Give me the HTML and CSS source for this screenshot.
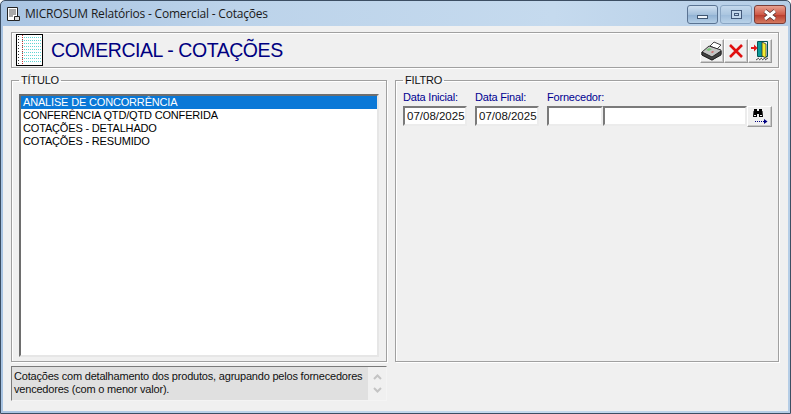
FILE: index.html
```html
<!DOCTYPE html>
<html lang="pt-BR">
<head>
<meta charset="utf-8">
<title>MICROSUM Relatórios - Comercial - Cotações</title>
<link rel="stylesheet" href="styles.css">
</head>
<body>
<div class="window">
  <div class="titlebar">
    <svg class="app-icon" width="14" height="16" viewBox="0 0 14 16"><path d="M1.5 1.5h10v13h-10z" fill="#fff" stroke="#222"/><path d="M3 4h7M3 6h7M3 8h7M3 10h4" stroke="#555"/><path d="M8.5 10.5h5v4h-5z" fill="#ddd" stroke="#222"/></svg>
    <span class="title-text">MICROSUM Relatórios - Comercial - Cotações</span>
    <div class="caption-buttons">
      <div class="cap cap-min"><span class="min-glyph"></span></div>
      <div class="cap cap-max"><span class="max-glyph"></span></div>
      <div class="cap cap-close">
        <svg width="16" height="12" viewBox="0 0 16 12"><path d="M3 2l10 8M13 2L3 10" stroke="#4a2a28" stroke-width="4.4"/><path d="M3 2l10 8M13 2L3 10" stroke="#fff" stroke-width="3"/></svg>
      </div>
    </div>
  </div>
  <div class="client">
    <div class="header">
      <svg class="note-icon" width="27" height="32" viewBox="0 0 27 32">
        <rect x="0.5" y="0.5" width="26" height="31" fill="#fff" stroke="#000"/>
        <path d="M6 3.500H25M6 6.500H25M6 9.500H25M6 12.500H25M6 15.500H25M6 18.500H25M6 21.500H25M6 24.500H25M6 27.500H25" stroke="#5fd4d4" stroke-dasharray="1 1"/>
        <path d="M6.500 1v30" stroke="#c03030" stroke-dasharray="1 1"/>
        <path d="M2.500 2v28" stroke="#333" stroke-dasharray="1 2"/>
      </svg>
      <h1 class="heading">COMERCIAL - COTAÇÕES</h1>
      <div class="tools">
        <button class="tool" aria-label="Imprimir">
          <svg width="22" height="20" viewBox="0 0 22 20">
            <path d="M9 5l4-4 7 3-4 4z" fill="#fff" stroke="#444"/>
            <path d="M1 11l7-6 12 4v4l-9 6-10-5z" fill="#c4c4c4" stroke="#333"/>
            <path d="M1 11l10 5 9-6v4l-9 5-10-5z" fill="#444" stroke="#222"/>
            <path d="M5 9l3-2 3 1-3 2z" fill="#7cc47c"/>
            <path d="M10 11l2-1 1 1-2 1z" fill="#d06060"/>
          </svg>
        </button>
        <button class="tool" aria-label="Cancelar">
          <svg width="16" height="16" viewBox="0 0 16 16"><path d="M2 2l12 12M14 2L2 14" stroke="#e01010" stroke-width="2.6"/></svg>
        </button>
        <button class="tool" aria-label="Sair">
          <svg width="20" height="20" viewBox="0 0 20 20">
            <path d="M7.500 0.500h10v15h-10z" fill="#e8f4f4" stroke="#055"/>
            <path d="M8 1h4l0 14H8z" fill="#0a9a9a"/>
            <path d="M12 1l4 2v14l-4-2z" fill="#f4ee30" stroke="#333" stroke-width="0.8"/>
            <path d="M1 6h3V3.500L7.500 7 4 10.500V8H1z" fill="#e01818"/>
            <path d="M6 19l3-2M9 19l3-2M12 19l3-2M15 19l3-2" stroke="#444"/>
          </svg>
        </button>
      </div>
    </div>
    <div class="columns">
      <div class="left">
        <fieldset class="group group-title">
          <legend>TÍTULO</legend>
          <ul class="list">
            <li class="row selected">ANALISE DE CONCORRÊNCIA</li>
            <li class="row">CONFERÊNCIA QTD/QTD CONFERIDA</li>
            <li class="row">COTAÇÕES - DETALHADO</li>
            <li class="row">COTAÇÕES - RESUMIDO</li>
          </ul>
        </fieldset>
        <div class="description">
          <p class="desc-text">Cotações com detalhamento dos produtos, agrupando pelos fornecedores vencedores (com o menor valor).</p>
          <div class="desc-scroll">
            <svg width="9" height="6" viewBox="0 0 9 6"><path d="M1 5l3.500-3.500L8 5" fill="none" stroke="#c4c4c4" stroke-width="2"/></svg>
            <svg width="9" height="6" viewBox="0 0 9 6"><path d="M1 1l3.500 3.500L8 1" fill="none" stroke="#c4c4c4" stroke-width="2"/></svg>
          </div>
        </div>
      </div>
      <fieldset class="group group-filter">
        <legend>FILTRO</legend>
        <div class="filters">
          <div class="field">
            <label class="lbl">Data Inicial:</label>
            <input class="input date" value="07/08/2025">
          </div>
          <div class="field">
            <label class="lbl">Data Final:</label>
            <input class="input date" value="07/08/2025">
          </div>
          <div class="field field-grow">
            <label class="lbl">Fornecedor:</label>
            <div class="supplier">
              <input class="input code" value="">
              <input class="input name" value="">
              <button class="tool search" aria-label="Pesquisar">
                <svg width="18" height="16" viewBox="0 0 18 16">
                  <path d="M3 0h3v2h2V0h3v2h.5L12 8H8V5H6v3H2l.5-6H3z" fill="#000"/>
                  <path d="M3 6h2v1H3zM9 6h2v1H9z" fill="#f0f0f0"/>
                  <path d="M4 12.500h9" stroke="#000080" stroke-dasharray="1 1"/>
                  <path d="M13 10l3.500 2.500L13 15z" fill="#000080"/>
                </svg>
              </button>
            </div>
          </div>
        </div>
      </fieldset>
    </div>
  </div>
</div>
</body>
</html>
```
FILE: styles.css
```css
* { box-sizing: border-box; }
html, body { margin: 0; padding: 0; }
body { width: 791px; height: 414px; overflow: hidden; font-family: "Liberation Sans", Arial, sans-serif; }
.window {
  width: 791px; height: 414px; display: flex; flex-direction: column;
  border: 1px solid #3c4e63; border-radius: 5px 5px 0 0; padding: 0 2px 2px; overflow: hidden;
  background: linear-gradient(90deg, #a9c4e2 0, #bcd3ea 30%, #c5daee 70%, #b5cde6 100%);
}
.titlebar { height: 25px; display: flex; align-items: center; flex: none; }
.app-icon { margin-left: 3px; margin-right: 5px; }
.title-text { font-family: "Open Sans", sans-serif; font-size: 12px; color: #1a1a1a; letter-spacing: -0.2px; }
.caption-buttons { margin-left: auto; display: flex; gap: 2px; align-self: flex-start; margin-top: 4px; margin-right: 2px; }
.cap { height: 19px; display: flex; align-items: center; justify-content: center; border: 1px solid #5a7392; border-radius: 3px; }
.cap-min { width: 31px; background: linear-gradient(#d0e0f0, #a4c0dc 50%, #8fb0d2 52%, #b4cee6); }
.cap-max { width: 32px; background: linear-gradient(#c4d8ec, #abc6e0 50%, #9ebcdb 52%, #b9d2e8); border-color: #8aa6c4; }
.cap-close { width: 32px; background: linear-gradient(#e8a090, #cf5a48 50%, #b93a2c 52%, #d47a60); border-color: #7a3d38; }
.min-glyph { width: 11px; height: 4px; margin-top: 5px; background: #eef4fa; border: 1px solid #3f5570; }
.max-glyph { width: 11px; height: 9px; background: #c4d8ec; border: 1px solid #43597a; box-shadow: inset 0 0 0 2px #c4d8ec, inset 0 0 0 3px #43597a; }
.client { flex: 1; background: #f0f0f0; padding: 6px 9px 0 8px; display: flex; flex-direction: column; min-height: 0; }
.header {
  height: 36px; display: flex; align-items: center; padding: 0 6px 0 4px; border: 1px solid #a0a0a0; box-shadow: inset 1px 1px 0 #fff, 1px 1px 0 #fff; flex: none;
}
.note-icon { flex: none; }
.heading { margin: 0 0 0 8px; font-size: 19.5px; font-weight: 400; color: #000080; letter-spacing: -0.44px; line-height: 1; padding-top: 1px; }
.tools { margin-left: auto; display: flex; gap: 0; padding-top: 1px; }
.tool {
  width: 24px; height: 24px; padding: 0; background: #f0f0f0; display: flex; align-items: center; justify-content: center;
  border: 1px solid; border-color: #fff #9a9a9a #9a9a9a #fff; outline: none; box-shadow: inset -1px -1px 0 #c8c8c8;
}
.columns { flex: 1; display: flex; gap: 8px; margin-top: 6px; min-height: 0; }
.left { width: 376px; flex: none; display: flex; flex-direction: column; }
.group {
  margin: 0; min-width: 0; border: 1px solid #a0a0a0; box-shadow: inset 1px 1px 0 #fff, 1px 1px 0 #fff; font-size: 11px;
}
.group legend { padding: 0 2px; margin-left: 0; font-size: 11px; letter-spacing: -0.2px; color: #111; line-height: 13px; }
.group-title { height: 288px; padding: 7px 7px 4px 7px; }
.list {
  margin: 0; padding: 0; list-style: none; height: 263px; background: #fff; border: 2px solid; border-color: #6e6e6e #e6e6e6 #e6e6e6 #6e6e6e;
  font-size: 11px; letter-spacing: -0.17px;
}
.row { height: 13px; line-height: 13px; padding-left: 2px; color: #000; white-space: nowrap; }
.selected { background: #0a78d7; color: #fff; }
.description {
  margin-top: 4px; height: 35px; display: flex; background: #e0e0e0; border: 1px solid; border-color: #7a7a7a #f4f4f4 #f4f4f4 #7a7a7a;
}
.desc-text { margin: 0; flex: 1; padding: 3px 2px 0 2px; font-size: 11px; letter-spacing: -0.2px; line-height: 13px; color: #111; }
.desc-scroll { width: 18px; flex: none; background: #f0f0f0; display: flex; flex-direction: column; align-items: center; justify-content: space-between; padding: 7px 0 7px; }
.group-filter { flex: none; width: 384px; height: 288px; padding: 4px 7px 0 7px; align-self: flex-start; }
.filters { display: flex; gap: 8px; }
.field { display: flex; flex-direction: column; width: 64px; }
.field-grow { width: auto; flex: 1; }
.lbl { font-size: 11px; letter-spacing: -0.2px; line-height: 13px; color: #000090; height: 15px; white-space: nowrap; }
.input {
  height: 20px; padding: 0 0 0 2px; background: #fff; border: 2px solid; border-color: #7a7a7a #ececec #ececec #7a7a7a; font-family: "Liberation Sans", Arial, sans-serif; font-size: 11.5px; color: #111; outline: none; border-radius: 0; min-width: 0;
}
.date { width: 64px; }
.supplier { display: flex; align-items: flex-start; }
.code { width: 56px; flex: none; }
.name { width: 144px; flex: none; }
.search { width: 25px; height: 21px; flex: none; }
```
